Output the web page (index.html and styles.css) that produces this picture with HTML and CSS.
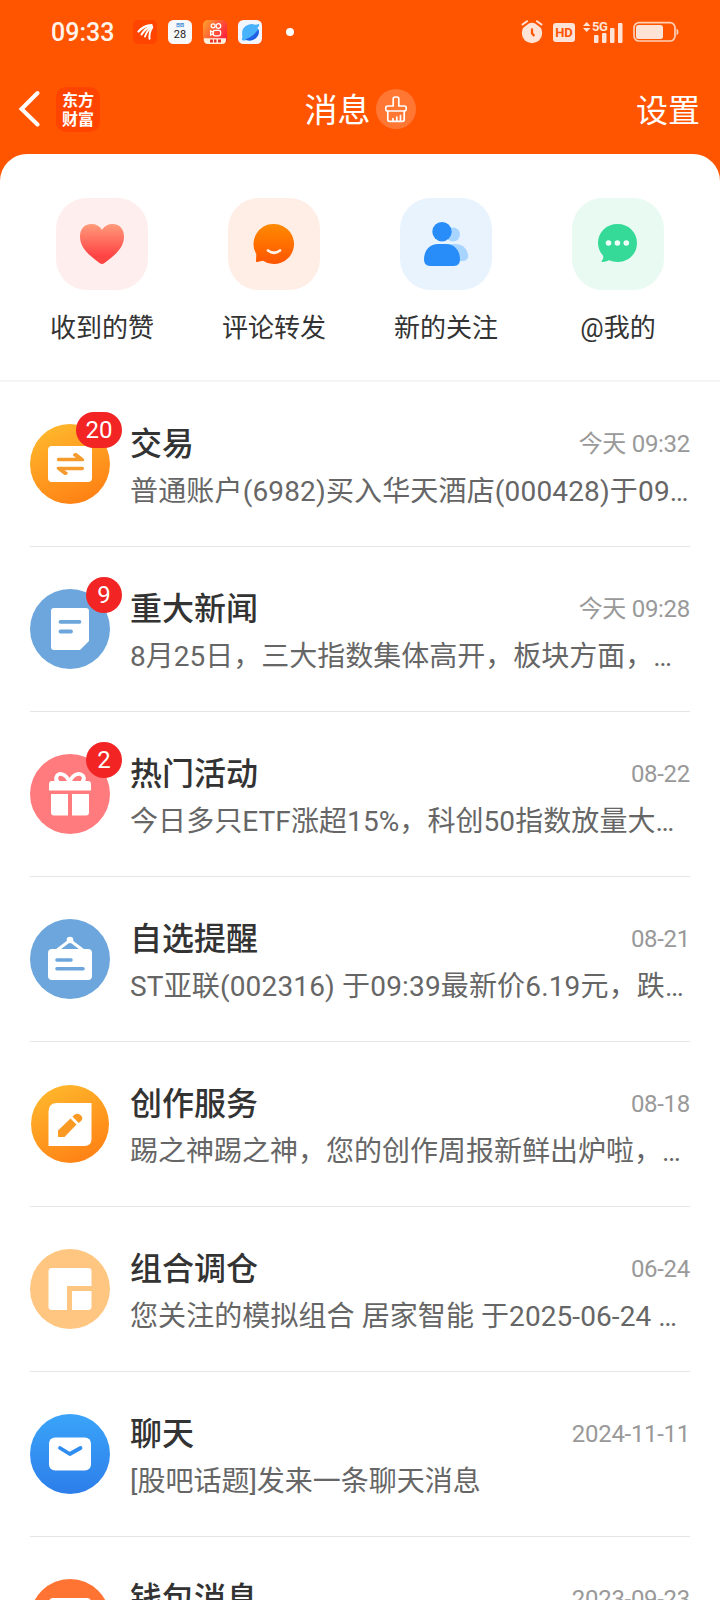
FILE: index.html
```html
<!DOCTYPE html>
<html lang="zh-CN">
<head>
<meta charset="utf-8">
<title>消息</title>
<link rel="stylesheet" href="styles.css">
</head>
<body>
<div class="screen">
  <div class="status">
    <span class="clock">09:33</span>
    <div class="apps">
      <svg width="24" height="24" viewBox="0 0 24 24"><rect width="24" height="24" rx="5" fill="#ff4400"/><g fill="none" stroke="#fff" stroke-linecap="round"><path d="M5.500 11.500Q11 5.500 18.500 5.200" stroke-width="2.200"/><path d="M8.500 14.500Q12 8.500 18.800 6" stroke-width="2"/><path d="M12 16.500Q14 10.500 19 7" stroke-width="1.900"/><path d="M16.500 18.800Q16 12 19.200 7.500" stroke-width="2"/></g></svg>
      <div class="cal"><span class="cal-week">周四</span><span class="cal-day">28</span></div>
      <svg width="24" height="24" viewBox="0 0 24 24"><defs><linearGradient id="ks" x1="0" y1="0" x2="1" y2="0.600"><stop offset="0" stop-color="#ffa42c"/><stop offset="1" stop-color="#ff2340"/></linearGradient></defs><rect width="24" height="24" rx="5" fill="url(#ks)"/><g fill="none" stroke="#fff" stroke-width="1.300"><circle cx="10.200" cy="5.800" r="2"/><circle cx="15.400" cy="6" r="2.300"/><rect x="10.200" y="10.400" width="7.400" height="5.400" rx="1.800"/><path d="M10.200 12.200L7.600 11V15L10.200 13.900"/></g><path d="M1 18.300H23V20Q23 24 19 24H5Q1 24 1 20Z" fill="#fff0dc"/><path d="M7 19.500h3v3h-3zM11 19.500h2.500v3H11zM15 19.500h3v3h-3z" fill="#e8352c"/></svg>
      <svg width="24" height="24" viewBox="0 0 24 24"><rect width="24" height="24" rx="5.500" fill="#f3f6fc"/><path d="M19.500 4.500C22 3 21.500 6 19.500 8Q22.500 14 18 18Q13.500 22 8.500 20Q2 22 4.500 17Q3 10 7 6.500Q12 2.500 17 4.800Z" fill="#48b2fc"/><path d="M20.500 9Q22 15 17.500 18.500Q13 22 7 19.500Q15 17 20.500 9Z" fill="#2261e6"/></svg>
    </div>
    <i class="dot"></i>
    <div class="sys">
      <svg width="22" height="24" viewBox="0 0 22 24"><circle cx="11" cy="13" r="10.200" fill="#ffe3d6"/><path d="M1.500 5.500L6.500 1.700M20.500 5.500L15.500 1.700" stroke="#ff5500" stroke-width="4.500"/><path d="M1.500 4.500L6 1.200M20.500 4.500L16 1.200" stroke="#ffe3d6" stroke-width="2" stroke-linecap="round"/><path d="M11 8.500V13.300L13.300 16" fill="none" stroke="#ff5500" stroke-width="2.200"/></svg>
      <span class="hd">HD</span>
      <div class="signal"><svg width="41" height="23" viewBox="0 0 41 23" fill="#ffe3d6"><path d="M0 5L3.700 1L7.400 5ZM0 7L3.700 11L7.400 7Z"/><rect x="11" y="14" width="4.500" height="8" rx="1"/><rect x="19" y="12" width="4.500" height="10" rx="1"/><rect x="27" y="7" width="4.500" height="15" rx="1"/><rect x="35" y="2" width="4.500" height="20" rx="1"/></svg><span class="net">5G</span></div>
      <svg width="46" height="22" viewBox="0 0 46 22"><rect x="1" y="1.700" width="41" height="18.300" rx="5" fill="none" stroke="#ffcfb5" stroke-width="1.700"/><rect x="3" y="4" width="27" height="14" rx="2.500" fill="#ffe3d6"/><path d="M43.500 7.500Q45.500 8 45.500 11T43.500 14.500Z" fill="#ffcfb5"/></svg>
    </div>
  </div>

  <header class="nav">
    <div class="nav-left">
      <svg width="22" height="38" viewBox="0 0 22 38"><path d="M19.500 3L3.500 19L19.500 34.500" fill="none" stroke="#fff" stroke-width="4" stroke-linecap="round" stroke-linejoin="miter"/></svg>
      <div class="logo"><span>东方</span><span>财富</span></div>
    </div>
    <div class="nav-title">
      <h1>消息</h1>
      <span class="clean"><svg width="24" height="28" viewBox="0 0 24 28" fill="none" stroke="#fff" stroke-width="1.700" stroke-linejoin="round" stroke-linecap="round"><path d="M9.200 11V4Q9.200 2 11 2H13Q14.800 2 14.800 4V11H20.500Q22.200 11 22.200 12.500V14.500Q22.200 16 20.500 16H3.500Q1.800 16 1.800 14.500V12.500Q1.800 11 3.500 11Z"/><path d="M3.800 16V24.500Q3.800 26.300 5.500 26.300H18.500Q20.200 26.300 20.200 24.500V16M9 26V23.500M12.800 26V22M16.500 26V20.500"/></svg></span>
    </div>
    <span class="settings">设置</span>
  </header>

  <main class="sheet">
    <nav class="shortcuts">
      <div class="shortcut"><span class="tile pink"><svg width="46" height="46" viewBox="0 0 46 46"><defs><linearGradient id="ht" x1="0" y1="0" x2="0" y2="1"><stop offset="0" stop-color="#ff9b7b"/><stop offset=".8" stop-color="#ff4444"/></linearGradient></defs><path d="M23 8.800C20.500 4.800 17 3 12.500 3C5 3 1 8.500 1 15.500C1 27 10 34 20.500 42Q23 44 25.500 42C36 34 45 27 45 15.500C45 8.500 41 3 33.500 3C29 3 25.500 4.800 23 8.800Z" fill="url(#ht)"/></svg></span><span>收到的赞</span></div>
      <div class="shortcut"><span class="tile peach"><svg width="46" height="46" viewBox="0 0 46 46"><defs><linearGradient id="cm" x1="0" y1="0" x2="0" y2="1"><stop offset="0" stop-color="#ff8a00"/><stop offset="1" stop-color="#ff5500"/></linearGradient></defs><path d="M23 3A20 20 0 1 1 12 39.700L6 41Q4.800 41.200 5 40L5.300 33A20 20 0 0 1 23 3Z" fill="url(#cm)"/><path d="M17 29.500Q23 34 29 29.500" fill="none" stroke="#fff0e8" stroke-width="2.800" stroke-linecap="round"/></svg></span><span>评论转发</span></div>
      <div class="shortcut"><span class="tile blue"><svg width="46" height="46" viewBox="0 0 46 46"><g fill="#a7d5ff"><circle cx="30" cy="13.500" r="7"/><path d="M24 23H33Q42 23 45 33Q46 39.500 40 40H28Z"/></g><circle cx="19" cy="10.700" r="9.700" fill="#288df8"/><path d="M15 23H23C32 23 37 30 37 38.500Q37 45 31 45H7Q1 45 1 38.500C1 30 6 23 15 23Z" fill="#288df8"/></svg></span><span>新的关注</span></div>
      <div class="shortcut"><span class="tile green"><svg width="46" height="46" viewBox="0 0 46 46"><path d="M22.500 3C33.500 3 42 11 42 22S33.500 41 22.500 41Q18 41 14 39.300Q11 41 7.500 41Q6 41 7 39.500Q9 37 8 34.500Q3 29 3 22C3 11 11.500 3 22.500 3Z" fill="#36da98"/><g fill="#f0fff8"><circle cx="13.500" cy="22" r="2.800"/><circle cx="22.400" cy="22" r="2.800"/><circle cx="31.300" cy="22" r="2.800"/></g></svg></span><span>@我的</span></div>
    </nav>

    <section class="list">
      <article class="row">
        <div class="avatar amber"><svg width="80" height="80" viewBox="0 0 80 80"><rect x="18" y="22" width="44" height="36" rx="4" fill="#fff"/><g fill="#f59a2d"><path d="M28.500 33.800H46L43 31.500Q43 28.500 46.500 29L53.500 34.500Q55.500 37.200 52.500 37.200H28.500Q26.800 37 26.800 35.500T28.500 33.800Z"/><path d="M52.300 46.200H34.500L38 48.700Q37.500 51.500 34.500 51L27.300 45.500Q25.500 42.800 28.500 42.700H52.300Q54 43 54 44.500T52.300 46.200Z"/></g></svg><span class="badge">20</span></div>
        <div class="body"><div class="head"><h2>交易</h2><time>今天 09:32</time></div><p class="wide">普通账户(6982)买入华天酒店(000428)于09…</p></div>
      </article>
      <article class="row">
        <div class="avatar sky"><svg width="80" height="80" viewBox="0 0 80 80"><path d="M24 19H56Q59 19 59 22V52L50 61H24Q21 61 21 58V22Q21 19 24 19Z" fill="#fff"/><path d="M30.500 32.800H49.500M30.500 42.500H41" stroke="#6ca6dc" stroke-width="3.800" stroke-linecap="round"/></svg><span class="badge">9</span></div>
        <div class="body"><div class="head"><h2>重大新闻</h2><time>今天 09:28</time></div><p>8月25日，三大指数集体高开，板块方面，…</p></div>
      </article>
      <article class="row">
        <div class="avatar coral"><svg width="80" height="80" viewBox="0 0 80 80"><path d="M39.500 27.500C35 19 29 18.500 26.800 22Q25 25.500 28 28M39.500 27.500C44 19 50 18.500 53.200 22Q55 25.500 52 28" fill="none" stroke="#fff" stroke-width="3.800"/><path d="M22 27H58Q61 27 61 30V36.500H19V30Q19 27 22 27ZM21 40H38V61.500H24Q21 61.500 21 58.500ZM42 40H59V58.500Q59 61.500 56 61.500H42Z" fill="#fff"/></svg><span class="badge">2</span></div>
        <div class="body"><div class="head"><h2>热门活动</h2><time>08-22</time></div><p class="semi">今日多只ETF涨超15%，科创50指数放量大…</p></div>
      </article>
      <article class="row">
        <div class="avatar sky"><svg width="80" height="80" viewBox="0 0 80 80"><path d="M26 32L38.500 22.500Q40 21.500 41.500 22.500L54 32" fill="none" stroke="#fff" stroke-width="3"/><circle cx="40" cy="21" r="3.300" fill="#fff"/><rect x="18" y="30" width="44" height="31" rx="4" fill="#fff"/><path d="M27 41H41M27 49.800H53" stroke="#6ca6dc" stroke-width="3.600" stroke-linecap="round"/></svg></div>
        <div class="body"><div class="head"><h2>自选提醒</h2><time>08-21</time></div><p class="wide">ST亚联(002316) 于09:39最新价6.19元，跌…</p></div>
      </article>
      <article class="row">
        <div class="avatar amber small"><svg width="80" height="80" viewBox="0 0 80 80"><path d="M27 19H61.500V55Q61.500 62 54.500 62H18.500V28Q18.500 19 27 19Z" fill="#fff"/><path d="M28 46.500L40.500 34.500L46.500 40.500L34.500 53H28ZM42.500 32.500L44.500 30.700Q48 28.500 51 31.500T50.500 37.500L48.700 39Z" fill="#fb9a22"/></svg></div>
        <div class="body"><div class="head"><h2>创作服务</h2><time>08-18</time></div><p>踢之神踢之神，您的创作周报新鲜出炉啦，…</p></div>
      </article>
      <article class="row">
        <div class="avatar sand"><svg width="80" height="80" viewBox="0 0 80 80" fill="#fff"><path d="M22 19H58Q61.500 19 61.500 22V37H37V61H22Q18.500 61 18.500 58V22Q18.500 19 22 19ZM42 42H61.500V58Q61.500 61 58 61H42Z"/></svg></div>
        <div class="body"><div class="head"><h2>组合调仓</h2><time>06-24</time></div><p class="semi">您关注的模拟组合 居家智能 于2025-06-24 …</p></div>
      </article>
      <article class="row">
        <div class="avatar azure"><svg width="80" height="80" viewBox="0 0 80 80"><rect x="19" y="23.500" width="42" height="33" rx="6" fill="#fff"/><path d="M30 34L39.800 40L50.500 34" fill="none" stroke="#2f8cf0" stroke-width="3.800" stroke-linecap="round" stroke-linejoin="round"/></svg></div>
        <div class="body"><div class="head"><h2>聊天</h2><time>2024-11-11</time></div><p>[股吧话题]发来一条聊天消息</p></div>
      </article>
      <article class="row">
        <div class="avatar orange"><svg width="80" height="80" viewBox="0 0 80 80"><rect x="19" y="19" width="42" height="40" rx="4" fill="#fff"/></svg></div>
        <div class="body"><div class="head"><h2>钱包消息</h2><time>2023-09-23</time></div></div>
      </article>
    </section>
  </main>
</div>
</body>
</html>
```

FILE: styles.css
```css
* { box-sizing: border-box; }

body {
  margin: 0;
  font-family: Roboto, "Noto Sans CJK SC", sans-serif;
  color: #333;
}

h1, h2, p { margin: 0; }
svg { display: block; flex: none; }

.screen {
  width: 720px;
  height: 1600px;
  overflow: hidden;
  background: #ff5500;
}

/* Status bar */
.status {
  display: flex;
  align-items: center;
  height: 64px;
  padding: 0 41px 0 51px;
}
.clock {
  width: 82px;
  padding-top: 2px;
  font-size: 25px;
  font-weight: 500;
  line-height: 30px;
  color: #fff3ea;
}
.apps { display: flex; gap: 11px; }
.cal {
  display: flex;
  flex-direction: column;
  align-items: center;
  width: 24px;
  height: 24px;
  border-radius: 5.500px;
  background: #f8f9fa;
}
.cal-week {
  margin-top: 3px;
  font-size: 4px;
  line-height: 6px;
  font-weight: 700;
  color: #2282cf;
}
.cal-day { font-size: 11px; line-height: 12px; color: #222; }
.dot {
  width: 8px;
  height: 8px;
  margin-left: 24px;
  border-radius: 50%;
  background: #fff;
}
.sys { display: flex; align-items: center; margin-left: auto; }
.hd {
  width: 22px;
  height: 19px;
  margin: 1px 8px 0 10px;
  border-radius: 3px;
  background: #ffe3d6;
  color: #ff5500;
  font-size: 13px;
  font-weight: 700;
  line-height: 19px;
  text-align: center;
}
.signal { position: relative; margin-right: 9px; }
.net {
  position: absolute;
  left: 9px;
  top: -1px;
  font-size: 13px;
  font-weight: 700;
  line-height: 14px;
  letter-spacing: -0.5px;
  color: #ffe3d6;
}

/* Title bar */
.nav {
  display: grid;
  grid-template-columns: 1fr auto 1fr;
  align-items: center;
  height: 90px;
  padding: 0 20px 0 18px;
  color: #fff;
}
.nav-left { display: flex; align-items: center; gap: 16px; }
.logo {
  display: flex;
  flex-direction: column;
  align-items: center;
  justify-content: center;
  width: 44px;
  height: 45px;
  border-radius: 10px;
  background: #ff4400;
  font-family: "Noto Sans CJK SC", sans-serif;
  font-size: 16px;
  font-weight: 700;
  line-height: 19px;
}
.nav-title {
  display: flex;
  align-items: center;
  gap: 5px;
  padding-left: 2px;
}
.nav-title h1 {
  padding-top: 3px;
  font-size: 33px;
  font-weight: 400;
  line-height: 44px;
}
.clean {
  display: flex;
  align-items: center;
  justify-content: center;
  width: 40px;
  height: 40px;
  border-radius: 50%;
  background: #ff7733;
}
.settings {
  justify-self: end;
  padding-top: 3px;
  font-size: 32px;
  line-height: 44px;
}

/* Content sheet */
.sheet {
  height: 1446px;
  overflow: hidden;
  border-radius: 27px 27px 0 0;
  background: #fff;
}
.shortcuts {
  display: grid;
  grid-template-columns: repeat(4, 1fr);
  height: 228px;
  padding: 44px 16px 0;
  border-bottom: 2px solid #f5f5f5;
}
.shortcut {
  display: flex;
  flex-direction: column;
  align-items: center;
  gap: 19px;
  font-size: 26px;
  line-height: 38px;
}
.tile {
  display: flex;
  align-items: center;
  justify-content: center;
  width: 92px;
  height: 92px;
  border-radius: 31px;
}
.pink { background: #ffeeee; }
.peach { background: #ffeee6; }
.blue { background: #e8f3fe; }
.green { background: #e8faf2; }

/* Message list */
.row {
  display: flex;
  gap: 20px;
  height: 165px;
  margin: 0 30px;
  border-bottom: 1px solid #e6e6e6;
}
.avatar {
  position: relative;
  flex: none;
  width: 80px;
  height: 80px;
  margin-top: 42px;
  border-radius: 50%;
}
.amber { background: linear-gradient(155deg, #ffb62c 10%, #ff7d12 95%); }
.sky { background: #6ca6dc; }
.coral { background: #ff7b7d; }
.sand { background: #ffc681; }
.azure { background: linear-gradient(#3aa4f9, #2d7eea); }
.orange { background: #ff7433; }
.small { background-clip: content-box; padding: 1px; }
.small svg { margin: -1px; }
.badge {
  position: absolute;
  top: -12px;
  right: -12px;
  min-width: 36px;
  height: 36px;
  padding: 0 9.500px;
  border-radius: 18px;
  background: #f22424;
  color: #fff;
  font-size: 24px;
  line-height: 36px;
  text-align: center;
}
.body { flex: 1; min-width: 0; padding-top: 40px; }
.head { display: flex; justify-content: space-between; }
.head h2 { font-size: 32px; font-weight: 500; line-height: 44px; }
.head time {
  font-size: 24px;
  line-height: 44px;
  letter-spacing: -0.3px;
  color: #999;
}
.body p {
  margin-top: 7px;
  font-size: 28px;
  line-height: 38px;
  color: #666;
  white-space: nowrap;
}
.body .wide { letter-spacing: 0.16px; }
.body .semi { letter-spacing: 0.08px; }
```
